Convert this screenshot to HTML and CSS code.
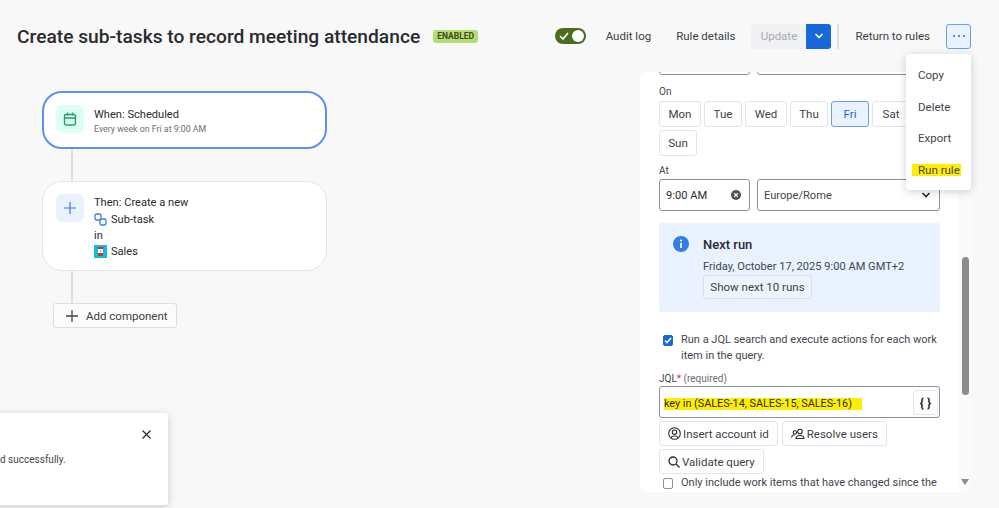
FILE: index.html
```html
<!DOCTYPE html>
<html lang="en">
<head>
    <meta charset="UTF-8">
    <meta name="viewport" content="width=device-width, initial-scale=1.0">
    <title>Create sub-tasks to record meeting attendance</title>
    <link rel="stylesheet" href="styles.css">
</head>
<body>
    <header class="topbar">
        <h1 class="title">Create sub-tasks to record meeting attendance</h1>
        <span class="badge">ENABLED</span>
        <div class="actions">
            <span class="toggle">
                <svg width="10" height="8" viewBox="0 0 10 8"><path d="M1 4l3 3 5-6" fill="none" stroke="#fff" stroke-width="1.6"/></svg>
                <span class="knob"></span>
            </span>
            <a class="link link-audit">Audit log</a>
            <a class="link link-details">Rule details</a>
            <div class="split">
                <span class="update">Update</span>
                <span class="update-arrow">
                    <svg width="10" height="6" viewBox="0 0 10 6"><path d="M1.5 1l3.5 3.5L8.500 1" fill="none" stroke="#fff" stroke-width="1.6"/></svg>
                </span>
            </div>
            <span class="divider"></span>
            <a class="link link-return">Return to rules</a>
            <button class="more"><i></i><i></i><i></i></button>
        </div>
    </header>

    <main class="main">
        <section class="canvas">
            <div class="card card-active">
                <span class="card-icon icon-green">
                    <svg width="14" height="14" viewBox="0 0 14 14" fill="none" stroke="#22a06b" stroke-width="1.4">
                        <rect x="1.500" y="2.500" width="11" height="10.500" rx="2"/>
                        <path d="M1.500 6h11M4.500 .5v3M9.500 .5v3"/>
                    </svg>
                </span>
                <div class="card-text">
                    <div class="card-line">When: Scheduled</div>
                    <div class="card-sub">Every week on Fri at 9:00 AM</div>
                </div>
            </div>
            <div class="line"></div>
            <div class="card card-then">
                <span class="card-icon icon-blue">
                    <svg width="12" height="12" viewBox="0 0 12 12"><path d="M6 0v12M0 6h12" stroke="#357de8" stroke-width="1.200"/></svg>
                </span>
                <div class="card-text">
                    <div class="card-line">Then: Create a new</div>
                    <div class="card-line">
                        <svg class="inline-icon" width="13" height="13" viewBox="0 0 13 13" fill="none" stroke="#357de8" stroke-width="1.300">
                            <rect x="1" y="1" width="6" height="6" rx="1.500"/>
                            <rect x="6" y="6" width="6" height="6" rx="1.500"/>
                        </svg>Sub-task
                    </div>
                    <div class="card-line">in</div>
                    <div class="card-line">
                        <svg class="inline-icon" width="13" height="13" viewBox="0 0 13 13">
                            <rect width="13" height="13" fill="#12bcdc"/>
                            <rect x="3.500" y="2" width="6" height="2" fill="#c9372c"/>
                            <rect x="4" y="4" width="5" height="7" fill="#fff"/>
                            <rect x="4" y="8" width="5" height="3" fill="#c9372c"/>
                            <rect x="6" y="5.500" width="1" height="1" fill="#0c66e4"/>
                        </svg>Sales
                    </div>
                </div>
            </div>
            <div class="line"></div>
            <button class="add">
                <svg width="12" height="12" viewBox="0 0 12 12"><path d="M6 0v12M0 6h12" stroke="#42464d" stroke-width="1.300"/></svg>
                Add component
            </button>

            <div class="toast">
                <button class="toast-close">
                    <svg width="9" height="9" viewBox="0 0 9 9"><path d="M.5.500l8 8M8.500.500l-8 8" stroke="#292a2e" stroke-width="1.200"/></svg>
                </button>
                <p class="toast-text">d successfully.</p>
            </div>
        </section>

        <section class="panel">
            <div class="row row-clipped">
                <span class="input input-time"></span>
                <span class="input input-zone"></span>
            </div>
            <label class="field-label label-on">On</label>
            <div class="days">
                <button class="btn day">Mon</button>
                <button class="btn day">Tue</button>
                <button class="btn day">Wed</button>
                <button class="btn day">Thu</button>
                <button class="btn day day-on">Fri</button>
                <button class="btn day">Sat</button>
                <button class="btn day">Sun</button>
            </div>
            <label class="field-label label-at">At</label>
            <div class="row">
                <span class="input input-time">
                    9:00 AM
                    <svg width="10" height="10" viewBox="0 0 10 10"><circle cx="5" cy="5" r="5" fill="#505258"/><path d="M3.200 3.200l3.600 3.600M6.800 3.200l-3.600 3.600" stroke="#fff" stroke-width="1.200"/></svg>
                </span>
                <span class="input input-zone">
                    Europe/Rome
                    <svg width="10" height="6" viewBox="0 0 10 6"><path d="M1.500 1l3.500 3.500L8.500 1" fill="none" stroke="#292a2e" stroke-width="1.600"/></svg>
                </span>
            </div>

            <div class="info">
                <svg class="info-icon" width="16" height="16" viewBox="0 0 16 16"><circle cx="8" cy="8" r="8" fill="#357de8"/><path d="M8 7v5" stroke="#fff" stroke-width="1.800"/><circle cx="8" cy="4.600" r="1.100" fill="#fff"/></svg>
                <div class="info-body">
                    <div class="info-title">Next run</div>
                    <div class="info-date">Friday, October 17, 2025 9:00 AM GMT+2</div>
                    <button class="btn info-btn">Show next 10 runs</button>
                </div>
            </div>

            <div class="check check-jql">
                <span class="box box-on">
                    <svg width="8" height="7" viewBox="0 0 8 7"><path d="M1 3.500l2 2 4-4.500" fill="none" stroke="#fff" stroke-width="1.600"/></svg>
                </span>
                <span>Run a JQL search and execute actions for each work item in the query.</span>
            </div>

            <label class="field-label label-jql">JQL<span class="star">*</span> <span class="req">(required)</span></label>
            <div class="jql">
                <span class="mark">key in (SALES-14, SALES-15, SALES-16)</span>
                <span class="braces">{ }</span>
            </div>
            <div class="tools">
                <button class="btn tool">
                    <svg width="13" height="13" viewBox="0 0 13 13" fill="none" stroke="#292a2e" stroke-width="1.100"><circle cx="6.500" cy="6.500" r="5.800"/><circle cx="6.500" cy="5.200" r="2.200"/><path d="M2.800 10.800c1-2.400 6.400-2.400 7.400 0"/></svg>
                    Insert account id
                </button>
                <button class="btn tool">
                    <svg width="14" height="12" viewBox="0 0 14 12" fill="none" stroke="#292a2e" stroke-width="1.100"><circle cx="9" cy="3.500" r="2.300"/><path d="M5 10.500c0-4 8-4 8 0z"/><circle cx="3.800" cy="4.500" r="1.700"/><path d="M.7 9.500c0-2 1.500-2.800 3-2.500"/></svg>
                    Resolve users
                </button>
                <button class="btn tool">
                    <svg width="12" height="12" viewBox="0 0 12 12" fill="none" stroke="#292a2e" stroke-width="1.300"><circle cx="5" cy="5" r="4"/><path d="M8 8l3.500 3.500"/></svg>
                    Validate query
                </button>
            </div>
            <div class="check check-only">
                <span class="box"></span>
                <span>Only include work items that have changed since the</span>
            </div>
        </section>

        <div class="scrollbar">
            <span class="thumb"></span>
            <span class="scroll-down"></span>
        </div>
    </main>

    <div class="menu">
        <a class="menu-item">Copy</a>
        <a class="menu-item">Delete</a>
        <a class="menu-item">Export</a>
        <a class="menu-item"><span class="mark mark-run">Run rule</span></a>
    </div>
</body>
</html>
```

FILE: styles.css
```css
* {
    box-sizing: border-box;
}

html, body {
    height: 100%;
}

body {
    margin: 0;
    font-family: Roboto, sans-serif;
    font-size: 11.100px;
    color: #42464d;
    background-color: #f8f8f8;
    overflow: hidden;
    position: relative;
}

button {
    font-family: inherit;
    cursor: pointer;
}

/* Top bar */
.topbar {
    display: flex;
    align-items: center;
    height: 72px;
    padding: 0 28px 0 17px;
}

.title {
    margin: 0;
    font-size: 19.200px;
    font-weight: 500;
    color: #292a2e;
}

.badge {
    margin-left: 13px;
    padding: 0 4px;
    height: 13px;
    line-height: 13px;
    font-size: 8.500px;
    font-weight: 700;
    color: #3c4a1c;
    background-color: #b3df72;
    border-radius: 3px;
}

.actions {
    display: flex;
    align-items: center;
    margin-left: auto;
}

.toggle {
    display: flex;
    align-items: center;
    justify-content: space-between;
    width: 31px;
    height: 16px;
    padding: 0 2px 0 4px;
    border-radius: 8px;
    background-color: #4c6b1f;
}

.knob {
    width: 12px;
    height: 12px;
    border-radius: 50%;
    background-color: #fff;
}

.link {
    font-size: 11.500px;
    color: #3b3f46;
    white-space: nowrap;
}

.link-audit {
    margin-left: 20px;
}

.link-details {
    margin-left: 25px;
}

.split {
    display: flex;
    height: 25px;
    margin-left: 16px;
}

.update {
    display: flex;
    align-items: center;
    justify-content: center;
    width: 55px;
    font-size: 11.500px;
    color: #a9abaf;
    background-color: #f0f1f2;
    border-radius: 3px 0 0 3px;
}

.update-arrow {
    display: flex;
    align-items: center;
    justify-content: center;
    width: 25px;
    background-color: #1868db;
    border-radius: 0 3px 3px 0;
}

.divider {
    width: 2px;
    height: 25px;
    margin: 0 16px 0 6px;
    background-color: #dddee1;
}

.more {
    display: flex;
    align-items: center;
    justify-content: center;
    gap: 3px;
    width: 25px;
    height: 25px;
    margin-left: 16px;
    padding: 0;
    background-color: #e9f2fe;
    border: 1px solid #669df1;
    border-radius: 3px;
}

.more i {
    width: 2px;
    height: 2px;
    background-color: #1868db;
    border-radius: 50%;
}

/* Menu */
.menu {
    position: absolute;
    left: 906px;
    top: 54px;
    width: 65px;
    height: 136px;
    padding: 5px 0 4px;
    display: flex;
    flex-direction: column;
    background-color: #fff;
    border-radius: 4px;
    box-shadow: 0 2px 8px rgba(9, 30, 66, 0.2);
}

.menu-item {
    flex: 1;
    display: flex;
    align-items: center;
    padding-left: 12px;
    font-size: 11.500px;
    color: #42464d;
}

.mark {
    background-color: #ffee00;
}

.mark-run {
    margin-left: -6px;
    padding: 0 1px 0 6px;
    line-height: 12px;
}

/* Layout */
.main {
    display: flex;
    align-items: flex-start;
    height: 420px;
}

.canvas {
    width: 640px;
    padding: 19px 0 0 42px;
    position: relative;
    flex-shrink: 0;
}

.panel {
    width: 319px;
    height: 420px;
    padding: 0 19px;
    overflow: hidden;
    background-color: #fff;
    border-radius: 6px 0 0 6px;
    flex-shrink: 0;
}

.scrollbar {
    width: 13px;
    height: 420px;
    position: relative;
    background-color: #fafafa;
}

.thumb {
    position: absolute;
    left: 3px;
    top: 185px;
    width: 7px;
    height: 138px;
    border-radius: 4px;
    background-color: #8c8c8c;
}

.scroll-down {
    position: absolute;
    left: 2px;
    top: 407px;
    border-left: 4.500px solid transparent;
    border-right: 4.500px solid transparent;
    border-top: 6px solid #8c8c8c;
}

/* Rule cards */
.card {
    display: flex;
    align-items: flex-start;
    width: 285px;
    background-color: #fff;
    border: 1px solid #e4e5e8;
    border-radius: 20px;
}

.card-active {
    height: 58px;
    padding: 12px;
    border: 2px solid #5a93ec;
}

.card-then {
    height: 90px;
    padding: 12px 13px;
}

.card-then .card-line:first-child {
    margin-bottom: 1px;
}

.card-icon {
    display: flex;
    align-items: center;
    justify-content: center;
    width: 28px;
    height: 28px;
    border-radius: 6px;
    flex-shrink: 0;
}

.icon-green {
    background-color: #dcfff1;
}

.icon-blue {
    background-color: #e9f2fe;
}

.card-text {
    margin-left: 10px;
}

.card-line {
    display: flex;
    align-items: center;
    height: 16px;
    color: #292a2e;
}

.card-active .card-line {
    height: 18px;
}

.card-sub {
    margin-top: 1px;
    font-size: 8.800px;
    color: #6b6e76;
}

.inline-icon {
    margin-right: 4px;
}

.line {
    width: 2px;
    height: 32px;
    margin-left: 29px;
    background-color: #dddee1;
}

.add {
    display: flex;
    align-items: center;
    gap: 8px;
    width: 124px;
    height: 25px;
    margin-left: 11px;
    padding: 0 0 0 12px;
    font-size: 11.500px;
    white-space: nowrap;
    color: #3b3f46;
    background-color: #fbfbfb;
    border: 1px solid #dddee1;
    border-radius: 3px;
}

/* Toast */
.toast {
    position: absolute;
    left: -20px;
    top: 341px;
    width: 188px;
    height: 92px;
    background-color: #fff;
    border-radius: 3px;
    box-shadow: 0 2px 8px rgba(9, 30, 66, 0.2);
}

.toast-close {
    position: absolute;
    left: 162px;
    top: 17px;
    display: flex;
    padding: 0;
    background: none;
    border: none;
}

.toast-text {
    position: absolute;
    left: 20px;
    top: 41px;
    margin: 0;
    font-size: 10px;
    white-space: nowrap;
}

/* Form */
.row {
    display: flex;
    gap: 7px;
}

.row-clipped {
    height: 3px;
    overflow: hidden;
    align-items: flex-end;
}

.input {
    display: flex;
    align-items: center;
    justify-content: space-between;
    height: 32px;
    flex-shrink: 0;
    padding: 0 8px 0 6px;
    color: #292a2e;
    border: 1px solid #8c8f97;
    border-radius: 3px;
}

.input-time {
    width: 91px;
}

.input-zone {
    width: 183px;
    color: #42464d;
}

.field-label {
    display: block;
    font-size: 10px;
    color: #42464d;
}

.label-on {
    margin-top: 11px;
    height: 15px;
}

.label-at {
    margin-top: 8px;
    height: 15px;
    padding-top: 1px;
}

.btn {
    display: flex;
    align-items: center;
    justify-content: center;
    height: 25px;
    padding: 0;
    font-size: 11.500px;
    color: #3b3f46;
    background-color: #fff;
    border: 1px solid #e4e5e8;
    border-radius: 3px;
}

.days {
    display: flex;
    flex-wrap: wrap;
    gap: 3px;
    width: 281px;
}

.day {
    width: 38px;
    height: 26px;
}

.days .day:first-child,
.days .day:nth-child(3) {
    width: 42px;
}

.day-on {
    color: #1868db;
    background-color: #e9f2fe;
    border-color: #669df1;
}

.info {
    display: flex;
    height: 89px;
    margin-top: 12px;
    padding: 13px 14px;
    background-color: #e9f2fe;
    border-radius: 3px;
}

.info-icon {
    flex-shrink: 0;
}

.info-body {
    margin-left: 14px;
}

.info-title {
    margin-top: 1px;
    font-size: 13px;
    font-weight: 500;
    line-height: 16px;
    color: #292a2e;
}

.info-date {
    margin-top: 6px;
    line-height: 16px;
    color: #42464d;
    white-space: nowrap;
}

.info-btn {
    width: 109px;
    height: 24px;
    background-color: #eef4fd;
    border-color: #d8dfe9;
}

.check {
    display: flex;
    gap: 8px;
    padding-left: 4px;
    font-size: 11px;
    line-height: 16px;
    color: #42464d;
}

.check-jql {
    margin-top: 20px;
}

.check-only {
    margin-top: 1px;
    white-space: nowrap;
}

.box {
    display: flex;
    align-items: center;
    justify-content: center;
    width: 10px;
    height: 11px;
    margin-top: 3px;
    flex-shrink: 0;
    background-color: #fff;
    border: 1px solid #8c8f97;
    border-radius: 2px;
}

.box-on {
    background-color: #1868db;
    border-color: #1868db;
}

.label-jql {
    margin-top: 9px;
    height: 13px;
}

.star {
    color: #c9372c;
}

.req {
    color: #6b6e76;
}

.jql {
    display: flex;
    align-items: center;
    justify-content: space-between;
    height: 32px;
    padding: 0 1px 0 4px;
    font-size: 10.800px;
    color: #292a2e;
    border: 1px solid #8c8f97;
    border-radius: 3px;
}

.jql .mark {
    margin-top: 3px;
    padding-right: 10px;
    line-height: 12px;
}

.braces {
    display: flex;
    align-items: center;
    justify-content: center;
    width: 25px;
    height: 25px;
    font-size: 12.500px;
    font-weight: 700;
    color: #292a2e;
    border: 1px solid #e4e5e8;
    border-radius: 3px;
    white-space: pre;
}

.tools {
    display: flex;
    flex-wrap: wrap;
    gap: 3px 4px;
    margin-top: 3px;
    width: 240px;
}

.tool {
    gap: 2px;
    padding: 0 8px;
    white-space: nowrap;
}
```
